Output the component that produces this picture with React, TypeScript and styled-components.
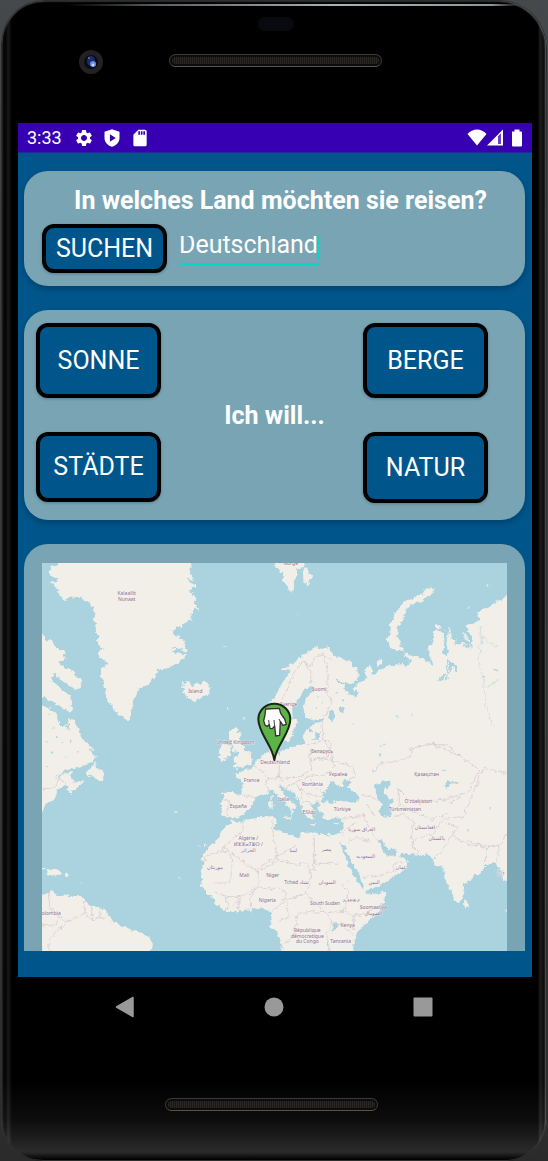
import React from 'react';
import styled, { createGlobalStyle } from 'styled-components';
import { MdSettings, MdSdCard } from 'react-icons/md';

const GlobalStyle = createGlobalStyle`
  * { box-sizing: border-box; }
  body {
    margin: 0;
    background: linear-gradient(#46494b, #3a3d3f 30%, #3a3a3a 70%, #2b2b2b);
    font-family: Roboto, "Noto Sans", sans-serif;
    color: #fff;
  }
`;

const Phone = styled.div`
  display: flex;
  flex-direction: column;
  min-height: 100vh;
  margin: 0 1px;
  padding: 0 15px 0 17px;
  border-radius: 44px 48px 42px 42px;
  background:
    linear-gradient(transparent 1080px, rgba(255, 255, 255, 0.05) 1120px, rgba(255, 255, 255, 0.17) 1152px, transparent 1160px),
    linear-gradient(90deg, #4a4a4a 0, #0a0a0a 2px, #050505 5px, #1a1a1a 7px, #000 11px, #000 calc(100% - 9px), #1e1e1e calc(100% - 7px), #0c0c0c calc(100% - 3px), #555 100%);
  box-shadow: inset 0 0 0 1px #2e2e2e, inset 1px 1px 1px #4a4a4a, inset -1px 1px 2px #8a8a8a;
`;

const TopBezel = styled.header`
  display: grid;
  grid-template-columns: 150px 1fr 150px;
  height: 123px;
  margin: 0 1px;
  background: linear-gradient(90deg, transparent, #5a6062 20%, #a9b4b6 60%, #8c9799 94%, transparent) 48px 4px / calc(100% - 60px) 2px no-repeat;
`;

const Camera = styled.svg`
  width: 24px;
  height: 24px;
  margin: 50px 0 0 60px;
`;

const BezelCenter = styled.div`
  display: flex;
  flex-direction: column;
  align-items: center;
  gap: 23px;
  padding: 17px 2px 0 0;
`;

const Sensor = styled.div`
  width: 36px;
  height: 14px;
  border-radius: 7px;
  background: #090a10;
`;

const Speaker = styled.div`
  width: 213px;
  height: 13px;
  border: 1px solid #3b3b39;
  border-bottom-color: #555550;
  border-radius: 7px;
  padding: 2px;
  background: #0c0c0c;

  &::before {
    content: "";
    display: block;
    height: 7px;
    border-radius: 4px;
    background: repeating-linear-gradient(90deg, #2c2824 0 1px, #181614 1px 2px);
  }
`;

const Screen = styled.main`
  display: flex;
  flex-direction: column;
  background: #00568b;
`;

const StatusBar = styled.div`
  display: flex;
  align-items: center;
  height: 30px;
  padding: 0 9px;
  background: #3700b3;
  border-bottom: 1px solid #1c2ca0;
  font-size: 18px;
  line-height: 20px;
`;

const StatusIcons = styled.div<{ $end?: boolean }>`
  display: flex;
  align-items: center;
  gap: ${(p) => (p.$end ? 0 : 8)}px;
  margin-left: ${(p) => (p.$end ? 'auto' : '12px')};

  svg { display: block; }
`;

const Content = styled.div`
  display: flex;
  flex-direction: column;
  gap: 24px;
  padding: 18px 7px 26px 6px;
`;

const Card = styled.section`
  border-radius: 24px;
  background: #78a4b4;
  box-shadow: 0 3px 6px rgba(0, 20, 50, 0.3);
`;

const SearchCard = styled(Card)`
  padding: 15px 18px 13px;
`;

const Title = styled.h1`
  margin: 0;
  padding-left: 12px;
  font-size: 25px;
  line-height: 30px;
  font-weight: 700;
  text-align: center;
  white-space: nowrap;
`;

const SearchRow = styled.form`
  display: flex;
  gap: 12px;
  margin-top: 8px;
`;

const ActionButton = styled.button<{ $height: number }>`
  width: 125px;
  height: ${(p) => p.$height}px;
  padding: 0;
  border: 4px solid #000;
  border-radius: 12px;
  background: #00568b;
  box-shadow: 0 1px 3px rgba(0, 0, 0, 0.25);
  color: #fff;
  font: 400 25px/30px Roboto, sans-serif;
`;

const Field = styled.label`
  position: relative;
  display: block;
  width: 140px;
  height: 41px;
  border-bottom: 2px solid #06d6c5;
`;

const CountryInput = styled.input`
  display: block;
  width: 140px;
  height: 40px;
  padding: 0;
  border: 0;
  outline: 0;
  background: transparent;
  clip-path: inset(12px 0 0 0);
  color: #fff;
  font: 400 25px/30px Roboto, sans-serif;
`;

const Caret = styled.span`
  position: absolute;
  right: 0;
  top: 12px;
  width: 2px;
  height: 24px;
  background: #06d6c5;
`;

const WishCard = styled(Card)`
  display: grid;
  grid-template-columns: 125px 1fr 125px 25px;
  grid-template-rows: 75px 71px;
  row-gap: 34px;
  padding: 13px 12px 17px;
`;

const WishTitle = styled.h2`
  grid-area: 1 / 1 / 3 / 5;
  align-self: center;
  margin: 0;
  padding-top: 6px;
  font-size: 25px;
  line-height: 30px;
  font-weight: 700;
  text-align: center;
  pointer-events: none;
`;

const WishCell = styled.div<{ $row: number; $col: number }>`
  grid-area: ${(p) => p.$row} / ${(p) => p.$col};
`;

const MapCard = styled(Card)`
  padding: 19px 18px 0;
  border-radius: 24px 24px 0 0;
  box-shadow: none;
`;

const MapView = styled.svg`
  display: block;
  width: 100%;
  height: auto;
  background: #aad3df;
`;

const NavBar = styled.nav`
  display: flex;
  justify-content: center;
  gap: 101px;
  height: 60px;
  padding-right: 2px;
`;

const NavButton = styled.button`
  display: flex;
  align-items: center;
  justify-content: center;
  width: 48px;
  height: 60px;
  padding: 0;
  border: 0;
  background: transparent;
`;

const BottomBezel = styled.footer`
  display: flex;
  justify-content: center;
  padding: 61px 7px 50px 0;
`;

const LAND = [
  // Greenland
  'M120 69L115 75 92 85 88 98 98 110 115 112 108 125 90 128 105 130 103 140 125 145 112 155 118 170 135 178 150 172 175 168 195 175 210 190 222 215 225 245 230 275 240 290 228 300 240 318 262 322 240 330 235 345 250 362 262 360 268 375 245 385 244 410 255 430 258 460 270 490 290 520 308 528 325 543 335 510 338 480 350 465 355 445 385 435 405 405 415 380 425 390 470 372 500 345 480 342 450 340 465 330 448 318 480 325 500 332 490 300 470 290 455 270 470 258 490 262 480 245 500 245 515 240 510 225 525 205 538 208 520 190 528 175 510 160 515 145 528 140 510 130 500 115 520 118 508 100 512 69Z',
  // Iceland
  'M483 440L500 438 488 428 505 430 515 440 530 432 540 434 555 423 570 440 565 460 545 470 525 482 500 472 506 462 485 460 498 450Z',
  // Baffin Island
  'M66 282L78 300 98 305 112 325 128 335 135 360 120 362 115 375 145 388 178 415 182 428 170 450 150 435 125 420 100 398 90 415 110 435 130 455 150 470 155 490 152 516 120 500 95 480 66 468Z',
  // Labrador and the east coast
  'M66 497L85 505 105 520 115 550 130 565 140 555 153 533 170 560 180 585 212 625 195 618 190 608 215 630 226 650 222 660 205 672 170 680 140 690 110 705 100 720 125 700 155 693 150 715 160 730 190 725 180 738 150 758 140 750 150 738 135 733 110 755 100 780 80 790 66 812Z',
  'M198 702L212 680 226 664 225 680 245 695 250 722 230 722 218 708Z',
  'M82 990L105 988 125 998 110 1005 80 1002ZM134 1002L147 1002 145 1006 134 1006ZM66 984L76 987 66 990Z',
  // South America
  'M66 1066L85 1060 98 1053 108 1070 120 1066 150 1070 180 1066 195 1085 215 1100 245 1105 262 1118 275 1145 295 1155 330 1172 370 1180 395 1198 397 1215 390 1233 66 1233Z',
  // British Isles
  'M630 575L645 562 655 568 650 576 663 578 655 592 665 610 672 630 692 645 695 662 688 675 665 680 638 683 652 670 640 655 655 650 656 635 642 632 636 612 628 595Z',
  'M605 620L620 611 632 618 630 648 600 662 604 645 596 635Z',
  // Svalbard
  'M765 69L780 95 795 90 790 120 815 157 820 125 832 95 825 85 852 80 850 69ZM855 82L864 98 875 110 865 132 850 122 845 118 852 108 847 95Z',
  // Novaya Zemlya
  'M1225 145L1240 145 1238 160 1215 175 1195 188 1180 190 1160 205 1150 230 1140 245 1132 265 1130 290 1147 330 1130 330 1110 320 1108 305 1095 300 1110 280 1112 250 1122 235 1130 215 1145 195 1165 178 1200 168Z',
  'M1072 362L1085 358 1087 370 1072 374ZM1155 335L1172 352 1162 350ZM1248 258L1258 257 1257 268 1249 268Z',
  // Eurasia and Africa
  'M745 500L750 488 762 472 780 450 785 435 800 410 815 390 785 388 830 365 845 350 870 335 890 322 905 330 915 318 930 330 935 345 950 352 985 365 1010 385 1015 410 1000 430 980 430 955 420 940 415 955 430 970 435 975 455 1000 465 1005 440 1020 425 1045 415 1035 400 1036 382 1052 378 1055 395 1050 408 1070 400 1085 390 1110 378 1150 373 1155 380 1180 365 1155 345 1175 350 1205 355 1225 365 1238 385 1236 360 1222 325 1235 310 1240 300 1243 275 1270 275 1272 300 1268 340 1280 350 1275 400 1250 420 1265 425 1280 405 1285 370 1310 375 1312 398 1310 375 1275 355 1285 335 1280 310 1290 265 1292 300 1305 298 1300 320 1320 310 1345 320 1355 335 1350 310 1335 295 1330 280 1350 292 1335 255 1380 245 1375 215 1400 205 1430 185 1461 170 1461 1020 1450 1020 1445 990 1435 975 1425 965 1405 972 1385 990 1350 1020 1330 1035 1332 1060 1320 1085 1310 1088 1295 1060 1275 1010 1270 975 1250 978 1240 965 1245 955 1225 945 1180 942 1140 940 1125 925 1105 925 1085 895 1070 898 1085 925 1095 945 1110 952 1125 950 1135 935 1145 950 1163 965 1155 985 1140 1000 1110 1015 1075 1038 1035 1052 1028 1030 1018 1000 1000 972 985 945 968 912 955 902 975 950 985 980 1008 1022 1030 1050 1042 1067 1095 1055 1090 1090 1070 1120 1020 1165 1000 1195 998 1233 785 1233 787 1210 770 1175 752 1160 755 1120 750 1115 725 1100 690 1110 620 1115 590 1090 570 1065 545 1040 545 1005 552 970 543 960 565 925 600 895 605 870 625 855 638 840 630 832 608 825 604 790 612 770 605 762 630 757 665 765 668 745 670 725 645 708 645 700 665 700 680 690 700 680 715 660 735 640 750 635 745 605 760 590 770 575 750 565 738 530Z',
];

const WATER = [
  // Baltic, Gulf of Bothnia and Gulf of Finland
  'M865 437L882 440 875 455 860 470 850 500 855 530 880 540 915 535 905 545 880 550 872 565 880 578 860 570 852 590 852 612 810 625 790 628 775 645 770 625 755 612 768 588 785 600 800 605 815 590 825 560 835 545 820 530 820 500 835 480 850 455Z',
  // Mediterranean
  'M630 838L672 825 680 810 695 795 708 770 735 762 752 752 765 755 775 772 800 795 815 812 812 832 822 818 820 808 832 802 825 795 800 772 780 745 785 738 800 745 820 760 835 780 843 798 850 815 862 832 878 836 875 815 890 820 870 795 898 790 898 815 912 832 930 838 968 835 972 850 962 880 940 884 910 885 872 878 845 878 838 892 800 882 768 870 764 860 770 842 762 828 720 832 680 840 655 848 640 842Z',
  // Black Sea with Azov
  'M905 785L910 762 920 745 930 728 945 725 960 742 975 735 965 728 990 718 992 728 980 742 1010 760 1020 778 1010 787 985 788 955 780 930 788Z',
  // Caspian
  'M1062 740L1085 725 1110 722 1112 735 1098 745 1092 752 1105 775 1124 785 1108 795 1116 825 1110 832 1085 828 1078 815 1085 795 1075 775 1065 760Z',
  // Lakes
  'M875 600L887 595 885 575 900 580 895 600ZM924 515L938 512 947 528 935 542 925 530ZM960 500L972 505 970 520 960 515ZM935 1155L955 1150 955 1165 935 1175Z',
  'M1275 728L1285 722 1320 728 1315 735 1290 732 1282 745ZM1386 418L1388 408 1395 412ZM1000 470L1015 455 1010 450 985 460ZM140 560L150 545 145 570ZM918 1190L926 1222 920 1215Z',
  'M1335 265L1350 275 1358 300 1354 322 1346 300 1338 285ZM1270 428L1282 412 1288 368 1302 368 1310 385 1306 402 1300 380 1290 384 1284 418Z',
  'M130 697L160 685 185 688 150 697 125 708 105 722Z',
  'M85 520l6 3-4 4zM95 560l5-3 3 6zM78 600l8 3-5 5zM120 610l7-2 2 5zM150 600l6 4-5 3zM90 640l7-3 3 6zM130 650l8 2-5 5zM76 680l6-2 2 6zM170 630l6 3-6 3zM110 590l4-4 3 6z',
  'M890 470l4-5 3 8zM900 490l5-4 1 8zM885 505l5-3 2 6zM950 450l5 6-6 3zM965 480l6 2-4 6zM990 555l8-8 2 3zM1080 620l12-12 2 4zM1078 650l4-12 3 10zM1130 525l3 8-5-2zM1175 520l6 3-6 4zM1270 690l12 4-11 2zM1405 800l8 2-6 6zM1340 870l8 3-7 3zM1420 395l12-8 2 4z',
];

const ISLANDS =
  'M750 768L758 768 757 779 751 778ZM747 784L758 782 758 805 748 808ZM790 830L812 829 808 842ZM868 852L895 853 885 858ZM942 850L958 845 952 854ZM1330 1075L1345 1093 1340 1104 1329 1100ZM1455 1108L1461 1112 1461 1120ZM605 320L616 318 610 325ZM620 503L627 505 625 511ZM668 533L674 530 670 540ZM832 225L838 225 836 230ZM1345 196L1349 200 1345 204ZM1404 132L1409 134 1405 138ZM536 914L540 918 535 918ZM552 912L558 914 552 919ZM478 1012L482 1014 478 1018ZM465 812L475 816 468 818ZM182 1020L185 1035 182 1034Z';

const BORDERS =
  'M785 480L810 430 825 390 850 365 870 380 890 345 912 345 918 370 925 420 920 455 935 490 910 535M850 365L872 395 872 430M912 345L935 360M905 545L910 600 880 612 860 610M910 600L935 605 925 650 870 660 872 628M870 660L875 685 840 710 800 715 775 715 775 680 M700 680L730 695 745 715 735 735 750 750M735 720L775 712 790 725M775 735L800 745 820 730 880 705 910 710 940 680 935 640 910 600M880 655L935 660 1000 680 1005 710 985 718M860 710L905 755M820 730L845 750 845 780 870 790 898 785M840 745L860 762 905 770M608 776L628 780 622 825M665 765L705 773M665 848L668 875 610 920 610 935 560 945 545 975 M610 920L705 990 830 915M610 935L635 945 632 1028 580 1030M705 990L715 995 715 1040 685 1060 660 1070 640 1100M755 840L760 890 775 960 830 975 855 965 870 990M715 995L775 960M762 860L775 880M883 885L883 970 955 970M883 970L883 985 870 990 872 1020 855 1060 800 1080M715 1045L780 1045 800 1060 785 1090 755 1115M690 1105L695 1060 715 1045M660 1075L655 1110M620 1070L620 1112M585 1060L620 1070 660 1070M800 1080L805 1135 780 1140M830 1120L825 1180 790 1215M830 1120L870 1115 915 1118 935 1140 920 1185 930 1233M855 1060L900 1100 915 1118 970 1115M970 1115L985 1055 965 1040 985 1025M970 1115L1000 1130 1035 1120 1090 1090M1000 1130L1000 1170M935 1150L965 1150 1000 1185M970 835L1000 832 1030 825 1040 850 1070 895M965 890L975 870 1010 845M985 905L1010 890 1055 905M1030 1010L1085 1005 1120 990 1125 970M1125 970L1150 965M1020 765L1050 770 1075 780M1040 790L1065 830M1118 832L1150 820 1180 845 1175 895 1190 940M1060 700L1080 670 1130 665 1175 650 1170 625 1240 612 1320 650 1380 690 1340 760 1260 780 1180 790 1135 745M1135 745L1135 790 1180 815 1240 840 1280 820M1190 940L1175 905 1240 880 1270 835 1330 830 1360 760 1390 685 1461 700M1260 780L1290 790 1330 765M1280 850L1310 860 1300 890 1350 915 1440 920M1310 860L1260 940 1240 955M1340 900L1400 925 1395 970M1400 920L1440 915 1430 960M1440 915L1461 880M1240 612L1280 615 1320 650M66 1155L100 1158 115 1130 90 1105 85 1060M115 1130L145 1145 195 1120 190 1085M145 1145L110 1175 85 1205 90 1233M195 1120L215 1140 260 1130M215 1100L215 1138M240 1105L240 1135M66 745L100 745 115 715 130 720 140 740';

const RIVERS = 'M1380 255L1385 300 1375 360 1390 420 1398 500 1420 560M1385 290L1430 320M1400 440L1440 420';

type Label = [number, number, string];
const LABELS: Label[] = [
  [320, 165, 'Kalaallit'],
  [320, 183, 'Nunaat'],
  [526, 459, 'Ísland'],
  [812, 75, 'Norge'],
  [897, 452, 'Suomi'],
  [806, 497, 'Sverige'],
  [646, 611, 'United Kingdom'],
  [765, 671, 'Deutschland'],
  [695, 725, 'France'],
  [655, 803, 'España'],
  [790, 782, 'Italia'],
  [906, 640, 'Беларусь'],
  [954, 708, 'Україна'],
  [877, 738, 'România'],
  [868, 822, 'Ελλάς'],
  [967, 814, 'Türkiye'],
  [1220, 708, 'Қазақстан'],
  [1195, 788, "O'zbekiston"],
  [1155, 814, 'Türkmenistan'],
  [1215, 866, 'افغانستان'],
  [1250, 900, 'پاکستان'],
  [1025, 872, 'العراق سوريا'],
  [1037, 954, 'السعودية'],
  [1143, 988, 'عمان'],
  [1062, 1032, 'اليمن'],
  [820, 935, 'ليبيا'],
  [920, 933, 'مصر'],
  [921, 1032, 'السودان'],
  [685, 901, 'Algérie /'],
  [685, 918, 'ⵍⵣⵣⴰⵢⴻⵔ /'],
  [685, 936, 'الجزائر'],
  [585, 986, 'موريتان'],
  [673, 1012, 'Mali'],
  [758, 1012, 'Niger'],
  [830, 1032, 'Tchad تشاد'],
  [742, 1086, 'Nigeria'],
  [915, 1095, 'South Sudan'],
  [995, 1085, 'ኢትዮጵያ'],
  [1060, 1108, 'Soomaaliya'],
  [1060, 1126, 'الصومال'],
  [983, 1161, 'Kenya'],
  [962, 1210, 'Tanzania'],
  [862, 1175, 'République'],
  [862, 1193, 'démocratique'],
  [862, 1210, 'du Congo'],
  [94, 1124, 'olombia'],
  [1443, 1003, 'မြန်'],
];

function WorldMap() {
  return (
    <MapView viewBox="66 69 1395 1164" role="img" aria-label="Karte">
      <defs>
        <filter id="coast" x="0" y="0" width="100%" height="100%">
          <feTurbulence type="fractalNoise" baseFrequency="0.07" numOctaves="3" seed="4" />
          <feDisplacementMap in="SourceGraphic" scale="18" xChannelSelector="R" yChannelSelector="G" />
        </filter>
      </defs>
      <g filter="url(#coast)">
        <rect x="30" y="30" width="1470" height="1240" fill="#aad3df" />
        {LAND.map((d) => <path key={d} d={d} fill="#f2efe9" stroke="#f2efe9" strokeWidth="3" />)}
        <path d="M1455 169H1490V1021H1455ZM780 1230H1000V1260H780ZM40 1066H70V1260H390V1230H66ZM120 72H512V40H120ZM40 282H68V468H40ZM40 497H68V812H40Z" fill="#f2efe9" />
        {WATER.map((d) => <path key={d} d={d} fill="#aad3df" />)}
        <path d={ISLANDS} fill="#f2efe9" />
        <path d={RIVERS} fill="none" stroke="#d3e1e2" strokeWidth="3" />
        <path d={BORDERS} fill="none" stroke="#d3c2cf" strokeWidth="2" />
      </g>
      <g
        fill="#8d6f93"
        stroke="#f6f3f0"
        strokeWidth="2"
        paintOrder="stroke"
        fontSize="15"
        textAnchor="middle"
        fontFamily='"Noto Sans", "DejaVu Sans", sans-serif'
      >
        {LABELS.map(([x, y, text]) => <text key={text} x={x} y={y}>{text}</text>)}
      </g>
      <path d="M763 660C757 615 715 580 715 538A48 47 0 0 1 811 538C811 580 769 615 763 660Z" fill="#5cb446" stroke="#1c2418" strokeWidth="6" strokeLinejoin="round" />
      <path
        d="M737 507L778 505 782 520 794 537 799 553 789 556 781 544 779 586 767 588 764 558 757 566 750 565 748 554 741 559 735 555 731 542 735 525Z"
        fill="#fff"
        stroke="#333"
        strokeWidth="4"
        strokeLinejoin="round"
      />
      <path d="M748 556L746 540M764 560L762 540M781 545L777 537" stroke="#444" strokeWidth="3" fill="none" />
    </MapView>
  );
}

export default function App() {
  return (
    <>
      <GlobalStyle />
      <Phone>
        <TopBezel>
          <Camera viewBox="0 0 24 24" aria-hidden="true">
            <circle cx="12" cy="12" r="12" fill="#232121" />
            <circle cx="12" cy="12" r="7" fill="#0a0c1c" />
            <ellipse cx="12" cy="11" rx="4" ry="5" fill="#1c2c68" />
            <circle cx="14" cy="14" r="3" fill="#6f8be0" />
            <circle cx="14" cy="15" r="1.4" fill="#c5d4ff" />
            <circle cx="10" cy="8" r="1" fill="#6076c4" />
          </Camera>
          <BezelCenter>
            <Sensor />
            <Speaker />
          </BezelCenter>
        </TopBezel>
        <Screen>
          <StatusBar>
            <span>3:33</span>
            <StatusIcons>
              <MdSettings size={20} />
              <svg width="20" height="20" viewBox="0 0 24 24" aria-hidden="true">
                <path fillRule="evenodd" fill="#fff" d="M12 1.500L3 4.500V12c0 5 3.800 9.200 9 10.500 5.200-1.300 9-5.500 9-10.500V4.500zM9.500 7.500l7 4.500-7 4.500z" />
              </svg>
              <MdSdCard size={20} />
            </StatusIcons>
            <StatusIcons $end>
              <svg width="20" height="17" viewBox="0 0 20 17" aria-hidden="true">
                <path d="M10 16.500L.5 5Q4.500.5 10 .5T19.500 5Z" fill="#fff" />
              </svg>
              <svg width="16" height="17" viewBox="0 0 16 17" aria-hidden="true">
                <path d="M0 16.500L16 .5V16.500ZM11 7.500V15h3V4.500Z" fill="#fff" fillRule="evenodd" />
                <path d="M11 7.500L14 4.500V15H11Z" fill="#6a40c8" />
              </svg>
              <svg width="20" height="18" viewBox="0 0 20 18" aria-hidden="true">
                <path d="M9 2.500h2.500V.5h5V2.500H18a1 1 0 0 1 1 1V16.500a1 1 0 0 1-1 1H10a1 1 0 0 1-1-1V3.500a1 1 0 0 1 0-1z" fill="#fff" />
              </svg>
            </StatusIcons>
          </StatusBar>
          <Content>
            <SearchCard>
              <Title>In welches Land möchten sie reisen?</Title>
              <SearchRow onSubmit={(e) => e.preventDefault()}>
                <ActionButton $height={49} type="submit">SUCHEN</ActionButton>
                <Field>
                  <CountryInput aria-label="Land" defaultValue="Deutschland" />
                  <Caret />
                </Field>
              </SearchRow>
            </SearchCard>
            <WishCard>
              <WishCell $row={1} $col={1}><ActionButton $height={75}>SONNE</ActionButton></WishCell>
              <WishCell $row={1} $col={3}><ActionButton $height={75}>BERGE</ActionButton></WishCell>
              <WishTitle>Ich will...</WishTitle>
              <WishCell $row={2} $col={1}><ActionButton $height={70}>STÄDTE</ActionButton></WishCell>
              <WishCell $row={2} $col={3}><ActionButton $height={71}>NATUR</ActionButton></WishCell>
            </WishCard>
            <MapCard>
              <WorldMap />
            </MapCard>
          </Content>
        </Screen>
        <NavBar>
          <NavButton aria-label="Zurück">
            <svg width="20" height="22" viewBox="0 0 20 22"><path d="M1.500 11L18 1.500V20.500Z" fill="#999" stroke="#999" strokeWidth="1.500" strokeLinejoin="round" /></svg>
          </NavButton>
          <NavButton aria-label="Startseite">
            <svg width="20" height="20" viewBox="0 0 20 20"><circle cx="10" cy="10" r="9.500" fill="#999" /></svg>
          </NavButton>
          <NavButton aria-label="Übersicht">
            <svg width="20" height="20" viewBox="0 0 20 20"><rect x=".5" y=".5" width="19" height="19" rx="1" fill="#999" /></svg>
          </NavButton>
        </NavBar>
        <BottomBezel>
          <Speaker />
        </BottomBezel>
      </Phone>
    </>
  );
}
